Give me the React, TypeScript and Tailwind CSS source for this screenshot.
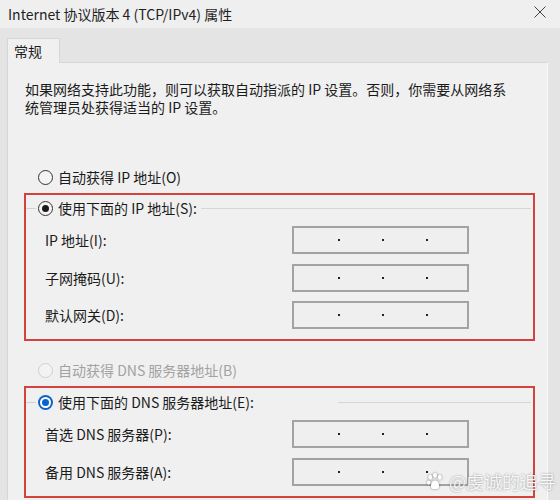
function Radio({ state }: { state: "off" | "on" | "blue" | "disabled" }) {
    if (state === "blue") {
        return (
            <span className="w-[15px] h-[15px] rounded-full bg-[#0a64c8] flex items-center justify-center shrink-0">
                <span className="w-[11px] h-[11px] rounded-full bg-white flex items-center justify-center">
                    <span className="w-[7px] h-[7px] rounded-full bg-[#0a64c8]"></span>
                </span>
            </span>
        );
    }
    return (
        <span
            className={
                state === "disabled"
                    ? "w-[15px] h-[15px] rounded-full border border-[#cfcfcf] bg-[#f3f3f3] shrink-0"
                    : "w-[15px] h-[15px] rounded-full border border-[#333] bg-[#f4f4f4] flex items-center justify-center shrink-0"
            }
        >
            {state === "on" && <span className="w-[7px] h-[7px] rounded-full bg-[#1a1a1a]"></span>}
        </span>
    );
}

function IpBox() {
    return (
        <div className="w-[177px] h-[28px] border-2 border-[#a3a3a3] bg-[#efefef] flex items-center pl-[44px] gap-[42px]">
            <span className="w-[2px] h-[2px] bg-[#222]"></span>
            <span className="w-[2px] h-[2px] bg-[#222]"></span>
            <span className="w-[2px] h-[2px] bg-[#222]"></span>
        </div>
    );
}

function Field({ label, top }: { label: string; top: string }) {
    return (
        <div className={"flex items-center h-[28px] pl-[19px] " + top}>
            <span className="w-[247px]">{label}</span>
            <IpBox />
        </div>
    );
}

export default function App() {
    return (
        <div className="relative w-[560px] h-[500px] overflow-hidden bg-[#e4e4e4] text-[14px] leading-[20px] text-[#1b1b1b] font-['Noto_Sans_CJK_SC','Noto_Sans',sans-serif]">
            {/* title bar */}
            <div className="h-[28px] bg-[#efefef] flex items-center justify-between pl-[8px] pr-[14px]">
                <span className="text-[14px] text-[#1f1f1f]">Internet 协议版本 4 (TCP/IPv4) 属性</span>
                <svg width="12" height="12" viewBox="0 0 12 12" className="mt-[-4px]">
                    <path d="M0.5 0.5 L11.5 11.5 M11.5 0.5 L0.5 11.5" stroke="#444" strokeWidth="1" />
                </svg>
            </div>

            {/* tabs */}
            <div className="pt-[10px] pl-[7px] flex">
                <div className="relative z-10 w-[53px] h-[25px] -mb-px border border-b-0 border-[#d6d6d6] bg-[#f0f0f0] pl-[6px] flex items-center">
                    常规
                </div>
            </div>

            {/* panel */}
            <div className="ml-[7px] w-[541px] h-[440px] border border-[#d6d6d6] border-r-[#fafafa] bg-[#f0f0f0] pl-[16px]">
                <div className="pt-[17px] ml-[1px] whitespace-nowrap">
                    <p className="h-[18px] leading-[18px]">如果网络支持此功能，则可以获取自动指派的 IP 设置。否则，你需要从网络系</p>
                    <p className="h-[18px] leading-[18px]">统管理员处获得适当的 IP 设置。</p>
                </div>

                <div className="mt-[51px] h-[20px] flex items-center gap-[5px] pl-[14px]">
                    <Radio state="off" />
                    <span>自动获得 IP 地址(O)</span>
                </div>

                <div className="mt-[6px] w-[511px] h-[148px] border-2 border-[#d4423e]">
                    <div className="mt-[3px] h-[20px] flex items-center">
                        <span className="w-[10px] border-t border-[#d2d2d2]"></span>
                        <span className="ml-[2px]"><Radio state="on" /></span>
                        <span className="ml-[5px]">使用下面的 IP 地址(S):</span>
                        <span className="flex-1 ml-[4px] mr-[2px] border-t border-[#d6d6d6]"></span>
                    </div>
                    <Field label="IP 地址(I):" top="mt-[8px]" />
                    <Field label="子网掩码(U):" top="mt-[10px]" />
                    <Field label="默认网关(D):" top="mt-[9px]" />
                </div>

                <div className="mt-[19px] h-[20px] flex items-center gap-[5px] pl-[14px] text-[#a2a2a2]">
                    <Radio state="disabled" />
                    <span>自动获得 DNS 服务器地址(B)</span>
                </div>

                <div className="mt-[6px] w-[511px] h-[112px] border-2 border-[#d4423e]">
                    <div className="mt-[4px] h-[20px] flex items-center">
                        <span className="w-[10px] border-t border-[#d2d2d2]"></span>
                        <span className="ml-[2px]"><Radio state="blue" /></span>
                        <span className="ml-[5px]">使用下面的 DNS 服务器地址(E):</span>
                        <span className="flex-1 ml-[84px] mr-[2px] border-t border-[#d6d6d6]"></span>
                    </div>
                    <Field label="首选 DNS 服务器(P):" top="mt-[8px]" />
                    <Field label="备用 DNS 服务器(A):" top="mt-[10px]" />
                </div>
            </div>

            {/* watermark */}
            <div className="absolute right-[4px] bottom-[8px] flex items-center gap-[5px] text-[18px] leading-[22px] text-white/90 [text-shadow:0_0_2px_rgba(0,0,0,0.45)]">
                <svg width="18" height="18" viewBox="0 0 17 17" className="[filter:drop-shadow(0_0_1px_rgba(0,0,0,0.5))]">
                    <ellipse cx="4" cy="5" rx="1.8" ry="2.4" fill="white" />
                    <ellipse cx="8.5" cy="3" rx="1.8" ry="2.4" fill="white" />
                    <ellipse cx="13" cy="5" rx="1.8" ry="2.4" fill="white" />
                    <ellipse cx="2.5" cy="10" rx="1.6" ry="2" fill="white" />
                    <path d="M8.5 8 C5 8 4 13 5 15 C6 16.5 11 16.5 12 15 C13 13 12 8 8.5 8 Z" fill="white" />
                </svg>
                <span>@虔诚的追寻</span>
            </div>
        </div>
    );
}
